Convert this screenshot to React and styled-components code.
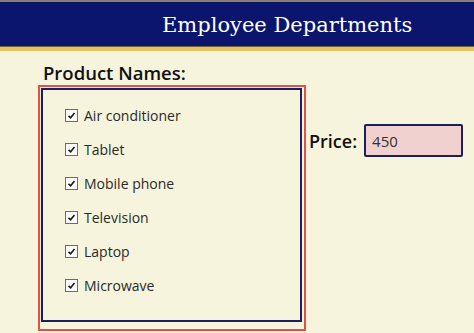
import React from "react";
import styled, { createGlobalStyle } from "styled-components";

const Global = createGlobalStyle`
  html, body { margin: 0; padding: 0; background: #f6f4dc; }
  body { width: 474px; height: 333px; overflow: hidden; }
`;

const Page = styled.div`
  width: 474px;
  height: 333px;
  background: #f6f4dc;
  font-family: "Open Sans", "Noto Sans", sans-serif;
  color: #1e1e1e;
`;

const Header = styled.header`
  height: 45px;
  background: #0b156e;
  border-top: 2px solid #8a806c;
  border-bottom: 4px solid #e3c35f;
  box-shadow: inset 0 -1px 0 #6f6440;
  display: flex;
  align-items: center;
  padding-left: 162px;
  box-sizing: content-box;
`;

const HeaderTitle = styled.h1`
  margin: 0;
  font-family: "DejaVu Serif", Georgia, serif;
  font-weight: normal;
  font-size: 21px;
  color: #ffffff;
  padding-top: 1px;
`;

const Main = styled.main`
  padding: 10px 0 0 38px;
`;

const SectionLabel = styled.div`
  font-size: 18.5px;
  font-weight: 600;
  color: #111;
  padding-left: 5px;
  line-height: 24px;
`;

const Row = styled.div`
  display: flex;
  align-items: flex-start;
`;

const Outline = styled.div`
  border: 2px solid #e2504b;
  padding: 1px 2px 7px 1px;
  width: 261px;
`;

const ListBox = styled.div`
  border: 2px solid #1a1f5e;
  height: 215px;
  padding: 15px 0 0 22px;
  display: flex;
  flex-direction: column;
  gap: 14px;
`;

const Item = styled.label`
  display: flex;
  align-items: center;
  gap: 6px;
  height: 20px;
  font-size: 14px;
  color: #2a2a2a;
`;

const Box = styled.span`
  width: 11px;
  height: 11px;
  border: 1px solid #6b6b78;
  background: #fbfbfb;
  display: flex;
  align-items: center;
  justify-content: center;
`;

const PriceGroup = styled.div`
  display: flex;
  align-items: center;
  margin-left: 3px;
  margin-top: 39px;
  gap: 7px;
`;

const PriceLabel = styled.span`
  font-size: 18px;
  font-weight: 600;
  color: #111;
`;

const PriceInput = styled.div`
  width: 99px;
  height: 33px;
  border: 2px solid #1c1f5c;
  border-radius: 2px;
  background: #f0d1d0;
  font-size: 15px;
  color: #333;
  display: flex;
  align-items: center;
  padding-left: 6px;
  box-sizing: border-box;
`;

const Check = () => (
  <svg width="9" height="9" viewBox="0 0 9 9">
    <path d="M1.5 4.8 L3.6 6.8 L7.5 2" stroke="#1a1a1a" strokeWidth="1.6" fill="none" />
  </svg>
);

const products = ["Air conditioner", "Tablet", "Mobile phone", "Television", "Laptop", "Microwave"];

export default function App() {
  return (
    <Page>
      <Global />
      <Header>
        <HeaderTitle>Employee Departments</HeaderTitle>
      </Header>
      <Main>
        <SectionLabel>Product Names:</SectionLabel>
        <Row>
          <Outline>
            <ListBox>
              {products.map((p) => (
                <Item key={p}>
                  <Box><Check /></Box>
                  {p}
                </Item>
              ))}
            </ListBox>
          </Outline>
          <PriceGroup>
            <PriceLabel>Price:</PriceLabel>
            <PriceInput>450</PriceInput>
          </PriceGroup>
        </Row>
      </Main>
    </Page>
  );
}
